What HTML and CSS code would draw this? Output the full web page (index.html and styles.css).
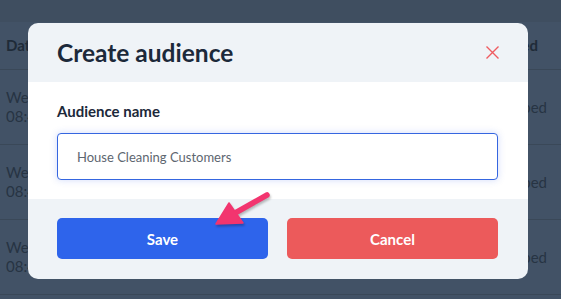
FILE: index.html
```html
<!DOCTYPE html>
<html lang="en">
<head>
    <meta charset="UTF-8">
    <meta name="viewport" content="width=device-width, initial-scale=1.0">
    <title>Create audience</title>
    <link rel="stylesheet" href="styles.css">
</head>
<body>
    <!-- Страница под затемнением -->
    <div class="page">
        <div class="topbar"></div>
        <div class="table">
            <div class="row head">
                <span>Date</span>
                <span>Subscribed</span>
            </div>
            <div class="row">
                <span>Wed, 12 Jan<br>08:41</span>
                <span>Subscribed</span>
            </div>
            <div class="row">
                <span>Wed, 12 Jan<br>08:42</span>
                <span>Subscribed</span>
            </div>
            <div class="row">
                <span>Wed, 12 Jan<br>08:43</span>
                <span>Subscribed</span>
            </div>
        </div>
    </div>

    <!-- Модальное окно -->
    <div class="modal">
        <div class="modal-header">
            <h1>Create audience</h1>
            <button class="close" aria-label="Close">
                <svg width="13" height="13" viewBox="0 0 13 13">
                    <path d="M0.5 0.5 L12.5 12.5 M12.5 0.5 L0.5 12.5" stroke="#ef5b60" stroke-width="1.4" fill="none"/>
                </svg>
            </button>
        </div>
        <div class="modal-body">
            <label for="audience">Audience name</label>
            <input type="text" id="audience" value="House Cleaning Customers">
        </div>
        <div class="modal-footer">
            <button class="btn save">Save</button>
            <button class="btn cancel">Cancel</button>
        </div>
    </div>

    <!-- Стрелка-подсказка -->
    <svg class="pointer" width="70" height="50" viewBox="0 0 70 50">
        <g fill="#f2356f" stroke="#f2356f" stroke-linecap="round" stroke-linejoin="round">
            <path d="M59 8 L20 30" stroke-width="5.5" fill="none"/>
            <path d="M8 37 L21 16 L35 36 Z" stroke-width="1.5"/>
        </g>
    </svg>
</body>
</html>
```

FILE: styles.css
```css
* {
    box-sizing: border-box;
}

body {
    margin: 0;
    font-family: 'Lato', sans-serif;
    background-color: #425266;
    width: 561px;
    height: 299px;
    overflow: hidden;
}

.topbar {
    height: 22px;
    background-color: #3f4e60;
}

.row {
    display: flex;
    justify-content: space-between;
    align-items: center;
    height: 75px;
    padding: 0 14px 0 6px;
    border-bottom: 1px solid #3a4858;
    color: #273443;
    font-size: 15px;
    line-height: 19px;
}

.row.head {
    height: 48px;
    font-weight: bold;
    color: #1f2b38;
    padding-right: 23px;
}

.modal {
    position: absolute;
    left: 28px;
    top: 23px;
    width: 500px;
    height: 256px;
    border-radius: 10px;
    overflow: hidden;
    background: #eff3f7;
    display: flex;
    flex-direction: column;
}

.modal-header {
    height: 59px;
    display: flex;
    align-items: center;
    justify-content: space-between;
    padding: 0 29px 0 29px;
}

.modal-header h1 {
    margin: 0;
    font-size: 24.5px;
    font-weight: bold;
    color: #1c293a;
}

.close {
    border: none;
    background: none;
    padding: 0;
    width: 13px;
    height: 13px;
    cursor: pointer;
}

.close svg {
    display: block;
}

.modal-body {
    background: #fff;
    height: 117px;
    padding: 20px 30px 0 29px;
}

.modal-body label {
    display: block;
    font-size: 15px;
    font-weight: bold;
    color: #1c293a;
    line-height: 18px;
    margin-bottom: 13px;
}

.modal-body input {
    width: 100%;
    height: 47px;
    border: 1px solid #3566e0;
    border-radius: 4px;
    padding: 0 19px;
    font-family: 'Lato', sans-serif;
    font-size: 13px;
    color: #5d6670;
    box-shadow: 0 0 7px rgba(70, 110, 240, 0.25);
    outline: none;
}

.modal-footer {
    flex: 1;
    display: flex;
    gap: 19px;
    padding: 19px 30px 0 29px;
}

.btn {
    flex: 1;
    height: 41px;
    border: none;
    border-radius: 5px;
    color: #fff;
    font-family: 'Lato', sans-serif;
    font-size: 15px;
    font-weight: bold;
    cursor: pointer;
}

.btn.save {
    background-color: #2e64eb;
}

.btn.cancel {
    background-color: #ec5a5b;
}

.pointer {
    position: absolute;
    left: 208px;
    top: 187px;
    filter: drop-shadow(1px 2px 1px rgba(0, 0, 0, 0.25));
}
```
